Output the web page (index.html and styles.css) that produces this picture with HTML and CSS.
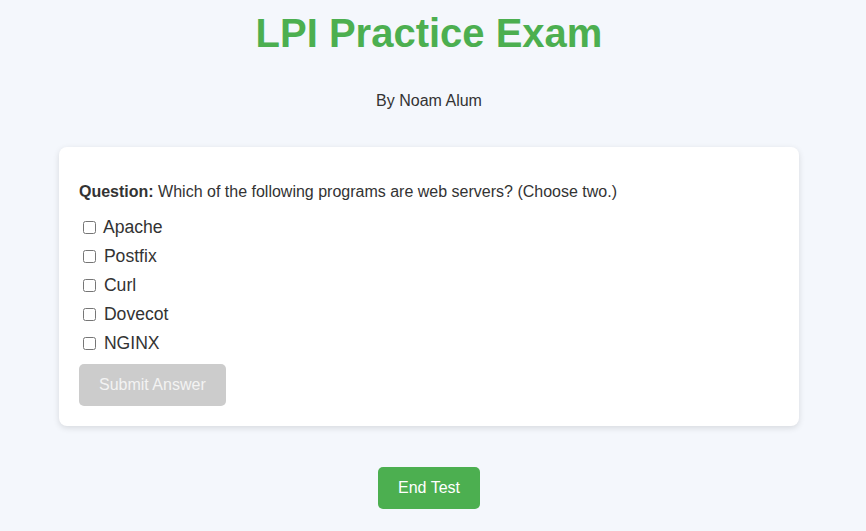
FILE: index.html
```html
<!DOCTYPE html>
<html lang="en">
<head>
<meta charset="utf-8">
<title>LPI Practice Exam</title>
<link rel="stylesheet" href="styles.css">
</head>
<body>
<div class="page">
  <h1 class="title">LPI Practice Exam</h1>
  <p class="byline">By Noam Alum</p>
  <div class="card">
    <p class="question"><strong>Question:</strong> Which of the following programs are web servers? (Choose two.)</p>
    <div class="options">
      <label class="option"><input type="checkbox"> Apache</label>
      <label class="option"><input type="checkbox"> Postfix</label>
      <label class="option"><input type="checkbox"> Curl</label>
      <label class="option"><input type="checkbox"> Dovecot</label>
      <label class="option"><input type="checkbox"> NGINX</label>
    </div>
    <button class="btn btn-submit" disabled>Submit Answer</button>
  </div>
  <div class="footer">
    <button class="btn btn-end">End Test</button>
  </div>
</div>
</body>
</html>
```
FILE: styles.css
```css
html, body {
  margin: 0;
  padding: 0;
  background: #f4f7fc;
}
body {
  font-family: "Liberation Sans", Arial, sans-serif;
  color: #333;
}
.page {
  width: 858px;
  display: flex;
  flex-direction: column;
  align-items: center;
  padding-top: 10px;
}
.title {
  margin: 0;
  font-size: 40px;
  line-height: 46px;
  font-weight: bold;
  color: #4caf50;
}
.byline {
  margin: 36px 0 0;
  font-size: 16px;
  line-height: 18px;
  color: #333;
}
.card {
  box-sizing: border-box;
  width: 740px;
  margin-top: 37px;
  padding: 20px;
  background: #fff;
  border-radius: 8px;
  box-shadow: 0 2px 6px rgba(0, 0, 0, 0.12);
  display: flex;
  flex-direction: column;
  align-items: flex-start;
}
.question {
  margin: 16px 0 16px;
  font-size: 16px;
  line-height: 18px;
}
.options {
  display: flex;
  flex-direction: column;
  gap: 9px;
}
.option {
  display: block;
  font-size: 17.6px;
  line-height: 20px;
  height: 20px;
  color: #333;
}
.option input {
  margin: 0 3px 0 4px;
  width: 13px;
  height: 13px;
  vertical-align: -1px;
}
.btn {
  font-family: "Liberation Sans", Arial, sans-serif;
  font-size: 16px;
  line-height: 18px;
  padding: 12px 20px;
  border: none;
  border-radius: 5px;
  color: #fff;
}
.btn-submit {
  margin-top: 11px;
  background: #cccccc;
  color: #f3f3f3;
}
.footer {
  margin-top: 41px;
}
.btn-end {
  background: #4caf50;
  cursor: pointer;
}
```
